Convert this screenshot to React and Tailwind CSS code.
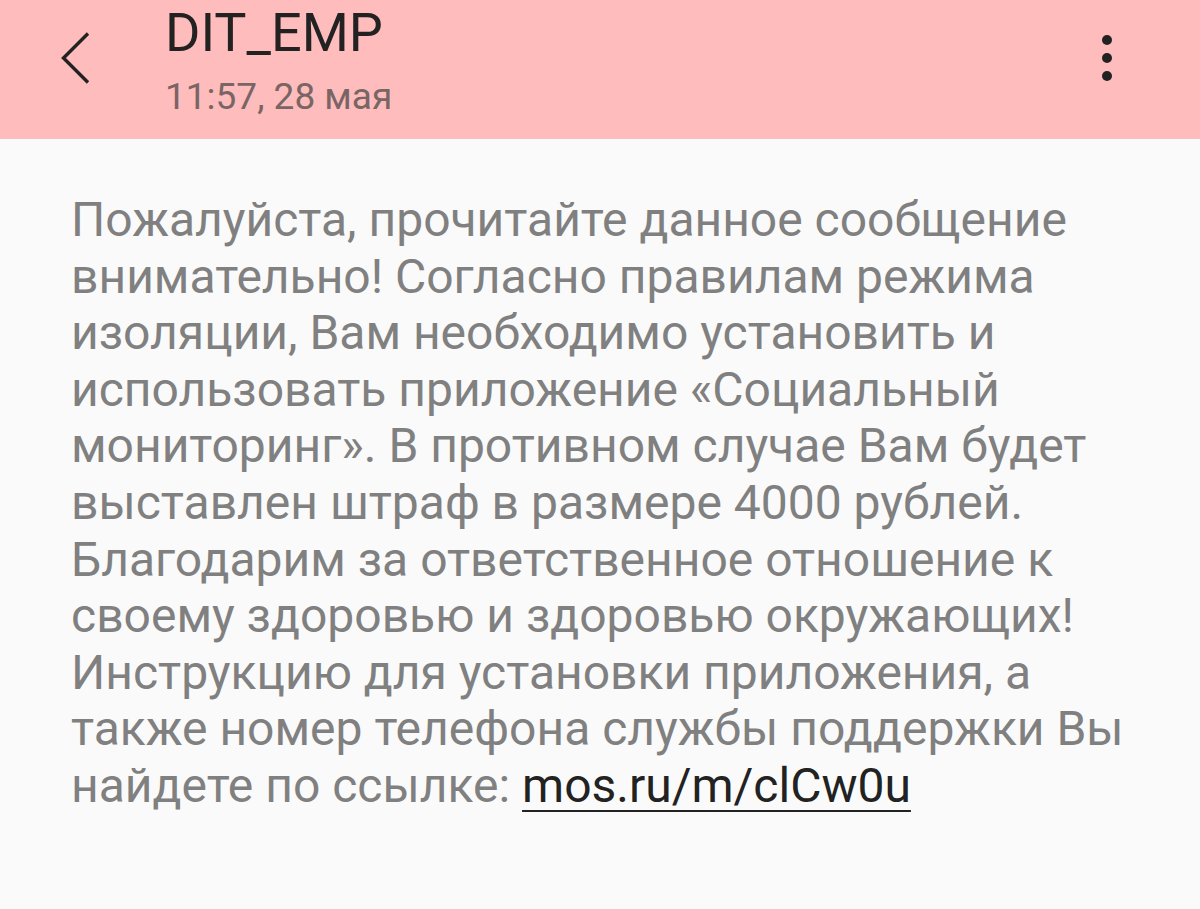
const lines = [
  'Пожалуйста, прочитайте данное сообщение',
  'внимательно! Согласно правилам режима',
  'изоляции, Вам необходимо установить и',
  'использовать приложение «Социальный',
  'мониторинг». В противном случае Вам будет',
  'выставлен штраф в размере 4000 рублей.',
  'Благодарим за ответственное отношение к',
  'своему здоровью и здоровью окружающих!',
  'Инструкцию для установки приложения, а',
  'также номер телефона службы поддержки Вы',
]

export default function App() {
  return (
    <div className="w-[1200px] h-[909px] bg-[#fafafa] font-['Roboto',sans-serif] overflow-hidden">
      {/* Header */}
      <div className="h-[139px] bg-[#ffbcbc] flex items-start">
        <div className="w-[165px] pt-[32px] pl-[60px]">
          <svg width="32" height="52" viewBox="0 0 32 52" fill="none">
            <path d="M28 1.5 L3.5 26 L28 50.5" stroke="#222" strokeWidth="3.4" />
          </svg>
        </div>
        <div className="flex-1 pt-[4px]">
          <div className="text-[54px] leading-[58px] text-[#222]">DIT_EMP</div>
          <div className="text-[37px] leading-[44px] text-[#7a6565] mt-[13px]">11:57, 28 мая</div>
        </div>
        <div className="w-[98px] pt-[35px] flex flex-col items-start gap-[8px]">
          <div className="w-[10px] h-[10px] rounded-full bg-[#222]" />
          <div className="w-[10px] h-[10px] rounded-full bg-[#222]" />
          <div className="w-[10px] h-[10px] rounded-full bg-[#222]" />
        </div>
      </div>

      {/* Message */}
      <div className="pl-[71px] pt-[53px] text-[48px] leading-[56.6px] text-[#808080] whitespace-nowrap">
        {lines.map((l, i) => (
          <div key={i}>{l}</div>
        ))}
        <div>
          найдете по ссылке:{' '}
          <span className="text-[#222] underline underline-offset-[8px] decoration-[2px]">mos.ru/m/clCw0u</span>
        </div>
      </div>
    </div>
  )
}
